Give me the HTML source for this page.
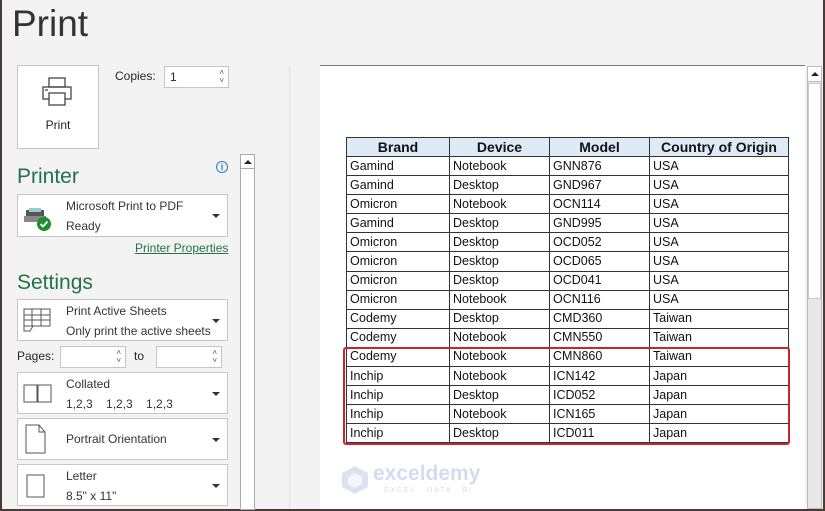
<!DOCTYPE html>
<html><head><style>
*{margin:0;padding:0;box-sizing:border-box}
body{width:825px;height:511px;background:#f3f3f3;position:relative;overflow:hidden;font-family:"Liberation Sans",sans-serif;color:#262626}
.a{position:absolute}
.box{position:absolute;background:#fff;border:1px solid #c6c6c6}
.dd{position:absolute;left:17px;width:211px;background:#fff;border:1px solid #c6c6c6}
.dd .t{position:absolute;left:48px;font-size:12px;color:#333}
.tri{position:absolute;right:7px;width:0;height:0;border-left:4px solid transparent;border-right:4px solid transparent;border-top:4px solid #333}
.h{color:#217346;font-size:21px}
table{position:absolute;left:346px;top:137px;border-collapse:collapse;font-size:12.5px;color:#111}
td{border:1px solid #333;height:19.1px;padding:0 3px;line-height:17px;white-space:nowrap}
th{background:#ddebf7;border:1px solid #333;height:19px;font-size:14px;font-weight:bold;line-height:17px}
.spin{position:absolute;right:4px;font-size:8px;line-height:8px;color:#555}
</style></head><body>
<div class="a" style="left:0;top:0;width:2px;height:511px;background:#4a3b35"></div>
<div class="a" style="left:823px;top:0;width:2px;height:511px;background:#4a3b35"></div>
<div class="a" style="left:0;top:509px;width:825px;height:2px;background:#4a3b35"></div>
<div class="a" style="left:12px;top:3px;font-size:37px;color:#333">Print</div>

<div class="box" style="left:17px;top:65px;width:82px;height:84px">
<svg class="a" style="left:23px;top:11px" width="32" height="30" viewBox="0 0 32 30" fill="none" stroke="#444" stroke-width="1.3"><rect x="8" y="1" width="16" height="9"/><rect x="2" y="10" width="28" height="12"/><rect x="8" y="16" width="16" height="12" fill="#fff"/><line x1="4" y1="13" x2="7" y2="13"/></svg>
<div class="a" style="left:0;width:80px;top:52px;text-align:center;font-size:12px;color:#222">Print</div>
</div>
<div class="a" style="left:115px;top:69px;font-size:12px">Copies:</div>
<div class="box" style="left:164px;top:66px;width:65px;height:22px"><span class="a" style="left:5px;top:3px;font-size:12px">1</span><div class="spin" style="top:2px">˄<br>˅</div></div>

<div class="a h" style="left:17px;top:165px">Printer</div>
<div class="a" style="left:216px;top:161px;width:12px;height:12px;border:1.3px solid #2b7cd3;border-radius:50%;color:#2b7cd3;font-size:9px;text-align:center;line-height:10px;font-weight:bold">i</div>
<div class="dd" style="top:194px;height:43px">
<svg class="a" style="left:5px;top:11px" width="30" height="26" viewBox="0 0 30 26"><rect x="3" y="4" width="18" height="9" fill="#555"/><rect x="1" y="10" width="22" height="6" fill="#888"/><rect x="6" y="2" width="12" height="4" fill="#9cc"/><circle cx="21" cy="18" r="7" fill="#1a8f2e"/><path d="M17.5 18l2.5 2.5 4.5-5" stroke="#fff" stroke-width="1.8" fill="none"/></svg>
<div class="t" style="top:4px">Microsoft Print to PDF</div><div class="t" style="top:24px">Ready</div><div class="tri" style="top:19px"></div></div>
<div class="a" style="left:135px;top:241px;font-size:12px;color:#217346;text-decoration:underline">Printer Properties</div>

<div class="a h" style="left:17px;top:271px">Settings</div>
<div class="dd" style="top:299px;height:42px">
<svg class="a" style="left:5px;top:8px" width="30" height="26" viewBox="0 0 30 26" fill="none" stroke="#555"><rect x="1" y="1" width="26" height="17"/><line x1="1" y1="7" x2="27" y2="7"/><line x1="1" y1="12" x2="27" y2="12"/><line x1="9" y1="1" x2="9" y2="18"/><line x1="18" y1="1" x2="18" y2="18"/><path d="M1 18v5h6l3-5"/></svg>
<div class="t" style="top:4px">Print Active Sheets</div><div class="t" style="top:24px">Only print the active sheets</div><div class="tri" style="top:19px"></div></div>
<div class="a" style="left:17px;top:349px;font-size:12px">Pages:</div>
<div class="box" style="left:60px;top:346px;width:66px;height:22px"><div class="spin" style="top:2px">˄<br>˅</div></div>
<div class="a" style="left:134px;top:349px;font-size:12px">to</div>
<div class="box" style="left:156px;top:346px;width:66px;height:22px"><div class="spin" style="top:2px">˄<br>˅</div></div>
<div class="dd" style="top:372px;height:42px">
<svg class="a" style="left:5px;top:11px" width="30" height="20" viewBox="0 0 30 20" fill="none" stroke="#555"><rect x="1" y="1" width="13" height="17"/><rect x="15" y="1" width="13" height="17"/></svg>
<div class="t" style="top:4px">Collated</div><div class="t" style="top:24px">1,2,3&nbsp;&nbsp;&nbsp;&nbsp;1,2,3&nbsp;&nbsp;&nbsp;&nbsp;1,2,3</div><div class="tri" style="top:19px"></div></div>
<div class="dd" style="top:418px;height:42px">
<svg class="a" style="left:7px;top:5px" width="22" height="30" viewBox="0 0 22 30" fill="none" stroke="#555"><path d="M1 1h13l6 7v21H1z"/><path d="M14 1v7h6"/></svg>
<div class="t" style="top:13px">Portrait Orientation</div><div class="tri" style="top:19px"></div></div>
<div class="dd" style="top:464px;height:42px">
<svg class="a" style="left:8px;top:9px" width="20" height="26" viewBox="0 0 20 26" fill="none" stroke="#555"><rect x="1" y="1" width="17" height="22"/></svg>
<div class="t" style="top:4px">Letter</div><div class="t" style="top:24px">8.5" x 11"</div><div class="tri" style="top:19px"></div></div>

<div class="a" style="left:240px;top:154px;width:15px;height:356px;background:#fff;border:1px solid #aaa"></div>
<div class="a" style="left:240px;top:154px;width:15px;height:15px;border:1px solid #aaa;background:#fff"><div class="a" style="left:3px;top:5px;border-left:4px solid transparent;border-right:4px solid transparent;border-bottom:4px solid #222"></div></div>
<div class="a" style="left:289px;top:65px;width:1px;height:444px;background:#e0e0e0"></div>

<div class="a" style="left:320px;top:65px;width:485px;height:444px;background:#fff;border-top:1px solid #777"></div>
<div class="a" style="left:807px;top:66px;width:15px;height:443px;background:#e8e8e8;border:1px solid #bbb"></div>
<div class="a" style="left:807px;top:66px;width:15px;height:16px;border:1px solid #bbb;background:#fff"><div class="a" style="left:3px;top:5px;border-left:4px solid transparent;border-right:4px solid transparent;border-bottom:4px solid #222"></div></div>
<div class="a" style="left:808px;top:83px;width:13px;height:216px;background:#fff;border:1px solid #c8c8c8"></div>

<table>
<tr><th style="width:103px">Brand</th><th style="width:100px">Device</th><th style="width:100px">Model</th><th style="width:139px">Country of Origin</th></tr>
<tr><td>Gamind</td><td>Notebook</td><td>GNN876</td><td>USA</td></tr>
<tr><td>Gamind</td><td>Desktop</td><td>GND967</td><td>USA</td></tr>
<tr><td>Omicron</td><td>Notebook</td><td>OCN114</td><td>USA</td></tr>
<tr><td>Gamind</td><td>Desktop</td><td>GND995</td><td>USA</td></tr>
<tr><td>Omicron</td><td>Desktop</td><td>OCD052</td><td>USA</td></tr>
<tr><td>Omicron</td><td>Desktop</td><td>OCD065</td><td>USA</td></tr>
<tr><td>Omicron</td><td>Desktop</td><td>OCD041</td><td>USA</td></tr>
<tr><td>Omicron</td><td>Notebook</td><td>OCN116</td><td>USA</td></tr>
<tr><td>Codemy</td><td>Desktop</td><td>CMD360</td><td>Taiwan</td></tr>
<tr><td>Codemy</td><td>Notebook</td><td>CMN550</td><td>Taiwan</td></tr>
<tr><td>Codemy</td><td>Notebook</td><td>CMN860</td><td>Taiwan</td></tr>
<tr><td>Inchip</td><td>Notebook</td><td>ICN142</td><td>Japan</td></tr>
<tr><td>Inchip</td><td>Desktop</td><td>ICD052</td><td>Japan</td></tr>
<tr><td>Inchip</td><td>Notebook</td><td>ICN165</td><td>Japan</td></tr>
<tr><td>Inchip</td><td>Desktop</td><td>ICD011</td><td>Japan</td></tr>
</table>
<div class="a" style="left:343px;top:347px;width:447px;height:98px;border:2.5px solid #c8262c;border-radius:3px"></div>

<svg class="a" style="left:340px;top:465px" width="30" height="30" viewBox="0 0 30 30"><path d="M15 1l13 7v14l-13 7-13-7V8z" fill="#dbe3f3"/><path d="M15 8l7 4v7l-7 4-7-4v-7z" fill="#f3f6fc"/></svg>
<div class="a" style="left:373px;top:462px;font-size:21px;font-weight:bold;color:#d3dcf0">exceldemy</div>
<div class="a" style="left:384px;top:485px;font-size:7.5px;color:#d8dde8;letter-spacing:1.5px">EXCEL · DATA · BI</div>
</body></html>
